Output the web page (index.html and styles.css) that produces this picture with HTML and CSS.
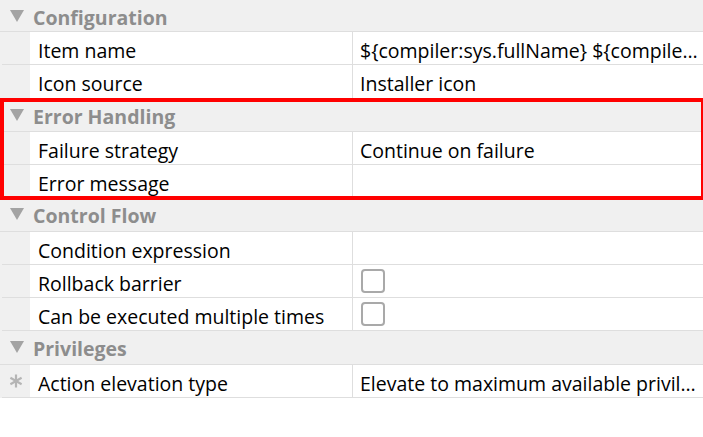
FILE: index.html
```html
<!DOCTYPE html>
<html>
<head>
    <title>Action properties</title>
    <link rel="stylesheet" href="styles.css">
</head>
<body>
    <div class="sheet">
        <div class="group">
            <div class="group-head"><span class="arrow"></span>Configuration</div>
            <div class="prop">
                <div class="gutter"></div>
                <div class="name">Item name</div>
                <div class="value">${compiler:sys.fullName} ${compile…</div>
            </div>
            <div class="prop">
                <div class="gutter"></div>
                <div class="name">Icon source</div>
                <div class="value">Installer icon</div>
            </div>
        </div>

        <div class="group">
            <div class="group-head"><span class="arrow"></span>Error Handling</div>
            <div class="prop">
                <div class="gutter"></div>
                <div class="name">Failure strategy</div>
                <div class="value">Continue on failure</div>
            </div>
            <div class="prop">
                <div class="gutter"></div>
                <div class="name">Error message</div>
                <div class="value"></div>
            </div>
        </div>

        <div class="group">
            <div class="group-head"><span class="arrow"></span>Control Flow</div>
            <div class="prop">
                <div class="gutter"></div>
                <div class="name">Condition expression</div>
                <div class="value"></div>
            </div>
            <div class="prop">
                <div class="gutter"></div>
                <div class="name">Rollback barrier</div>
                <div class="value"><span class="check"></span></div>
            </div>
            <div class="prop">
                <div class="gutter"></div>
                <div class="name">Can be executed multiple times</div>
                <div class="value"><span class="check"></span></div>
            </div>
        </div>

        <div class="group">
            <div class="group-head"><span class="arrow"></span>Privileges</div>
            <div class="prop">
                <div class="gutter">
                    <svg class="star" width="14" height="14" viewBox="0 0 14 14">
                        <g stroke="#b5b5b5" stroke-width="2.2" stroke-linecap="butt">
                            <line x1="7" y1="0.5" x2="7" y2="13.5"/>
                            <line x1="1.4" y1="3.75" x2="12.6" y2="10.25"/>
                            <line x1="1.4" y1="10.25" x2="12.6" y2="3.75"/>
                        </g>
                    </svg>
                </div>
                <div class="name">Action elevation type</div>
                <div class="value">Elevate to maximum available privil…</div>
            </div>
        </div>

        <div class="highlight"></div>
    </div>
</body>
</html>
```

FILE: styles.css
```css
body {
    margin: 0;
    background-color: #fff;
    font-family: "Open Sans", "Noto Sans", sans-serif;
    font-size: 19.5px;
    color: #000;
}

.sheet {
    position: relative;
    width: 703px;
}

.group {
    background-color: #f0f0f0;
}

.group-head {
    display: flex;
    align-items: flex-start;
    height: 33.27px;
    box-sizing: border-box;
    padding-top: 4px;
    line-height: 27px;
    font-weight: bold;
    color: #8d8d8d;
    border-bottom: 1px solid #dedede;
}

.group:first-child .group-head {
    height: 32px;
}

.arrow {
    width: 0;
    height: 0;
    margin: 6px 9px 0 10px;
    border-left: 7.5px solid transparent;
    border-right: 7.5px solid transparent;
    border-top: 12px solid #a3a3a3;
}

.prop {
    display: grid;
    grid-template-columns: 28px 322px 1fr;
    margin-left: 2px;
    height: 33.27px;
    box-sizing: border-box;
    border-bottom: 1px solid #dedede;
    line-height: 27px;
    overflow: hidden;
}

.gutter {
    display: flex;
    align-items: center;
    padding-left: 7px;
}

.name {
    background-color: #fff;
    padding: 5px 0 0 8px;
    white-space: nowrap;
}

.value {
    background-color: #fff;
    border-left: 1px solid #dedede;
    padding: 5px 6px 0 7px;
    white-space: nowrap;
    overflow: hidden;
    display: flex;
    align-items: flex-start;
}

.check {
    display: block;
    width: 24px;
    height: 24px;
    box-sizing: border-box;
    margin: -1px 0 0 1px;
    border: 2px solid #a9a9a9;
    border-radius: 4px;
    background-color: #fff;
}

.highlight {
    position: absolute;
    left: 0;
    top: 98px;
    width: 705px;
    height: 102px;
    box-sizing: border-box;
    border: 4px solid #ff0000;
}
```
